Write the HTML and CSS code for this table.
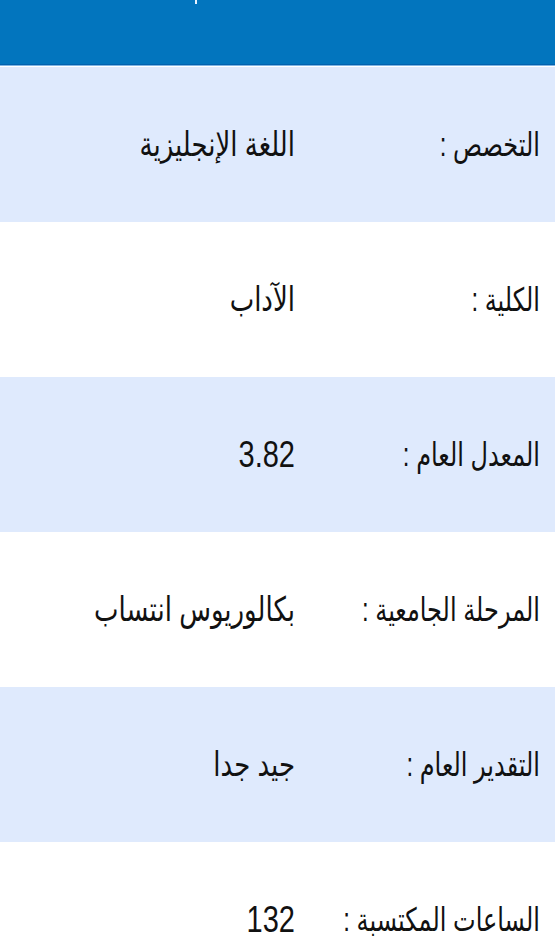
FILE: index.html
```html
<!DOCTYPE html>
<html lang="ar" dir="rtl">
<head>
<meta charset="utf-8">
<link rel="stylesheet" href="styles.css">
</head>
<body>
<header class="topbar"><span class="topbar-mark"></span></header>
<main class="list">
  <div class="row alt"><span class="label">التخصص :</span><span class="value">اللغة الإنجليزية</span></div>
  <div class="row"><span class="label">الكلية :</span><span class="value">الآداب</span></div>
  <div class="row alt"><span class="label">المعدل العام :</span><span class="value num">3.82</span></div>
  <div class="row"><span class="label">المرحلة الجامعية :</span><span class="value">بكالوريوس انتساب</span></div>
  <div class="row alt"><span class="label">التقدير العام :</span><span class="value">جيد جدا</span></div>
  <div class="row"><span class="label">الساعات المكتسبة :</span><span class="value num">132</span></div>
</main>
</body>
</html>
```
FILE: styles.css
```css
html, body {
  margin: 0;
  padding: 0;
  background: #ffffff;
}
body {
  font-family: "Liberation Sans", "DejaVu Sans", sans-serif;
  color: #111111;
  width: 555px;
  overflow: hidden;
}
.topbar {
  height: 64px;
  background: #0275be;
  border-bottom: 1px solid #0262ad;
  box-shadow: 0 1px 0 #7fb4e3;
  position: relative;
}
.topbar-mark {
  position: absolute;
  top: 0;
  left: 195px;
  width: 2px;
  height: 4px;
  background: #e8f2ff;
}
.list {
  margin-top: 2px;
  display: flex;
  flex-direction: column;
}
.row {
  height: 155px;
  display: flex;
  align-items: center;
  padding-right: 15px;
  background: #ffffff;
  white-space: nowrap;
}
.row.alt {
  background: #dfeafd;
}
.label {
  width: 245px;
  flex: none;
  font-size: 24px;
  display: inline-block;
  transform: scaleY(1.35);
}
.value {
  font-size: 26px;
  display: inline-block;
  transform: scaleY(1.3);
}
.value.num {
  font-size: 29px;
  transform: scaleY(1.3);
}
```
